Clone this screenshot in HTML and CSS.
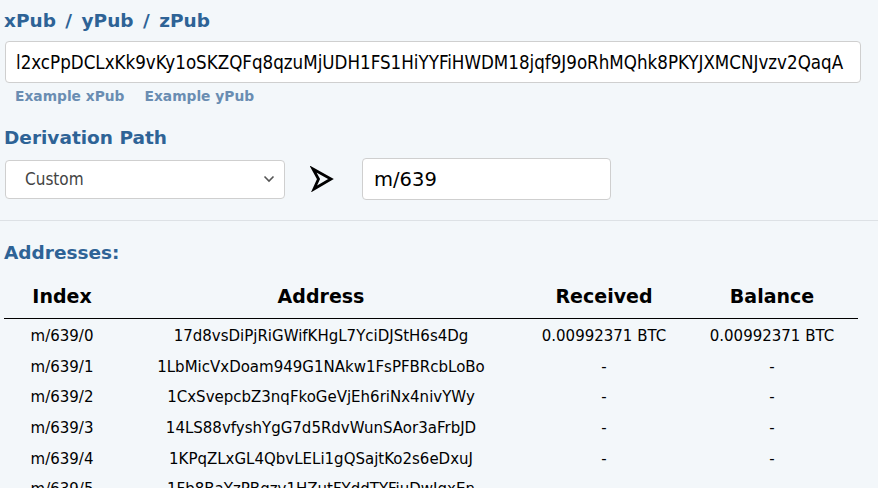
FILE: index.html
```html
<!DOCTYPE html>
<html>
<head>
<meta charset="utf-8">
<link rel="stylesheet" href="styles.css">
</head>
<body>
<div class="page">
  <h2 class="title t1">xPub / yPub / zPub</h2>
  <input class="xpub" type="text" value="l2xcPpDCLxKk9vKy1oSKZQFq8qzuMjUDH1FS1HiYYFiHWDM18jqf9J9oRhMQhk8PKYJXMCNJvzv2QaqA">
  <div class="examples">
    <a class="ex">Example xPub</a>
    <a class="ex">Example yPub</a>
  </div>
  <h2 class="title t2">Derivation Path</h2>
  <div class="path-row">
    <div class="select">
      <span>Custom</span>
      <svg class="chev" width="12" height="8" viewBox="0 0 12 8"><path d="M1.5 1.5 L6 6 L10.5 1.5" fill="none" stroke="#555" stroke-width="1.6"/></svg>
    </div>
    <svg class="arrow" width="24" height="26" viewBox="0 0 24 26"><path d="M3 3 L21 13 L4 23 L8.5 13 Z" fill="none" stroke="#000" stroke-width="2.8" stroke-linejoin="miter"/></svg>
    <input class="path" type="text" value="m/639">
  </div>
  <hr class="sep">
  <h2 class="title t3">Addresses:</h2>
  <table class="tbl">
    <thead>
      <tr><th class="c1">Index</th><th class="c2">Address</th><th class="c3">Received</th><th class="c4">Balance</th></tr>
    </thead>
    <tbody>
      <tr><td>m/639/0</td><td>17d8vsDiPjRiGWifKHgL7YciDJStH6s4Dg</td><td>0.00992371 BTC</td><td>0.00992371 BTC</td></tr>
      <tr><td>m/639/1</td><td>1LbMicVxDoam949G1NAkw1FsPFBRcbLoBo</td><td>-</td><td>-</td></tr>
      <tr><td>m/639/2</td><td>1CxSvepcbZ3nqFkoGeVjEh6riNx4nivYWy</td><td>-</td><td>-</td></tr>
      <tr><td>m/639/3</td><td>14LS88vfyshYgG7d5RdvWunSAor3aFrbJD</td><td>-</td><td>-</td></tr>
      <tr><td>m/639/4</td><td>1KPqZLxGL4QbvLELi1gQSajtKo2s6eDxuJ</td><td>-</td><td>-</td></tr>
      <tr><td>m/639/5</td><td>1Fb8BaYzPBqzv1HZutFYddTYFiuDwJqxEn</td><td>-</td><td>-</td></tr>
    </tbody>
  </table>
</div>
</body>
</html>
```
FILE: styles.css
```css
html, body {
  margin: 0;
  padding: 0;
  background: #f3f7fa;
  overflow: hidden;
}
.page {
  font-family: "DejaVu Sans", Verdana, sans-serif;
  color: #000;
  padding: 0 0 0 4px;
}
.title {
  margin: 0;
  color: #2e6396;
  font-size: 18.5px;
  font-weight: bold;
  line-height: 24px;
}
.t1 {
  padding-top: 9px;
  word-spacing: 3px;
}
.xpub {
  display: block;
  box-sizing: border-box;
  margin: 8px 0 0 1px;
  width: 856px;
  height: 42px;
  border: 1px solid #cfcfcf;
  border-radius: 4px;
  background: #fff;
  padding: 0 0 0 10px;
  font-family: "DejaVu Sans Condensed", "DejaVu Sans", sans-serif;
  font-size: 18.6px;
  color: #000;
  outline: none;
}
.examples {
  display: flex;
  gap: 20px;
  margin-top: 4px;
  padding-left: 11px;
  height: 18px;
}
.ex {
  color: #6a8db2;
  font-size: 13.8px;
  font-weight: bold;
  line-height: 18px;
}
.t2 {
  margin-top: 21px;
}
.path-row {
  display: flex;
  align-items: center;
  height: 42px;
  margin-top: 8px;
  margin-left: 1px;
}
.select {
  box-sizing: border-box;
  width: 280px;
  height: 39px;
  border: 1px solid #cfcfcf;
  border-radius: 4px;
  background: #fff;
  display: flex;
  align-items: center;
  justify-content: space-between;
  padding: 0 9px 0 19px;
  font-family: "DejaVu Sans Condensed", "DejaVu Sans", sans-serif;
  font-size: 17px;
  color: #444;
}
.chev {
  display: block;
}
.arrow {
  display: block;
  margin-left: 25px;
}
.path {
  box-sizing: border-box;
  margin-left: 28px;
  width: 249px;
  height: 42px;
  border: 1px solid #cfcfcf;
  border-radius: 4px;
  background: #fff;
  padding: 0 0 0 11px;
  font-family: "DejaVu Sans", sans-serif;
  font-size: 19.5px;
  color: #000;
  outline: none;
}
.sep {
  border: 0;
  border-top: 1px solid #dde1e5;
  margin: 20px 0 0 -4px;
  height: 0;
}
.t3 {
  margin-top: 20px;
}
.tbl {
  border-collapse: collapse;
  width: 854px;
  margin-top: 8px;
  table-layout: fixed;
}
.tbl th {
  font-size: 19px;
  font-weight: bold;
  text-align: center;
  height: 45px;
  padding: 0;
  border-bottom: 1px solid #000;
}
.c1 { width: 116px; }
.c2 { width: 402px; }
.c3 { width: 164px; }
.c4 { width: 172px; }
.tbl td {
  font-size: 15px;
  text-align: center;
  height: 26.6px;
  padding: 4px 0 0 0;
  white-space: nowrap;
}
```
